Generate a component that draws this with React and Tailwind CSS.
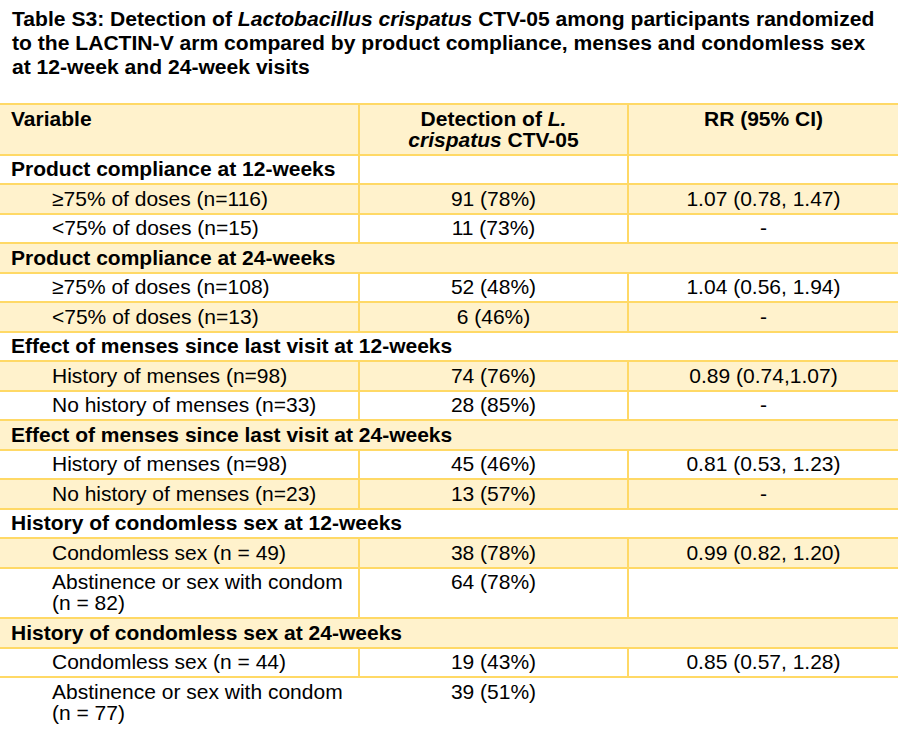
const rows = [
  { type: 'group', label: 'Product compliance at 12-weeks', fill: false, split: true },
  { label: '≥75% of doses (n=116)', det: '91 (78%)', rr: '1.07 (0.78, 1.47)', fill: true },
  { label: '<75% of doses (n=15)', det: '11 (73%)', rr: '-', fill: false },
  { type: 'group', label: 'Product compliance at 24-weeks', fill: true },
  { label: '≥75% of doses (n=108)', det: '52 (48%)', rr: '1.04 (0.56, 1.94)', fill: false },
  { label: '<75% of doses (n=13)', det: '6 (46%)', rr: '-', fill: true },
  { type: 'group', label: 'Effect of menses since last visit at 12-weeks', fill: false },
  { label: 'History of menses (n=98)', det: '74 (76%)', rr: '0.89 (0.74,1.07)', fill: true },
  { label: 'No history of menses (n=33)', det: '28 (85%)', rr: '-', fill: false },
  { type: 'group', label: 'Effect of menses since last visit at 24-weeks', fill: true },
  { label: 'History of menses (n=98)', det: '45 (46%)', rr: '0.81 (0.53, 1.23)', fill: false },
  { label: 'No history of menses (n=23)', det: '13 (57%)', rr: '-', fill: true },
  { type: 'group', label: 'History of condomless sex at 12-weeks', fill: false },
  { label: 'Condomless sex (n = 49)', det: '38 (78%)', rr: '0.99 (0.82, 1.20)', fill: true },
  { label: ['Abstinence or sex with condom', '(n = 82)'], det: '64 (78%)', rr: '', fill: false },
  { type: 'group', label: 'History of condomless sex at 24-weeks', fill: true },
  { label: 'Condomless sex (n = 44)', det: '19 (43%)', rr: '0.85 (0.57, 1.28)', fill: false },
  { label: ['Abstinence or sex with condom', '(n = 77)'], det: '39 (51%)', rr: '', fill: false, last: true },
];

// single-line row: 21 + 6.5 padding + 2 border = 29.5px
const cell = 'pt-[2.5px] pb-[4px] leading-[21px]';

function Label({ label }) {
  if (Array.isArray(label)) {
    return (
      <>
        {label[0]}
        <br />
        {label[1]}
      </>
    );
  }
  return label;
}

function Row({ row }) {
  const bg = row.fill ? 'bg-[#FFF2CC]' : 'bg-white';
  if (row.type === 'group') {
    if (row.split) {
      return (
        <div className={`flex border-b-2 border-[#FFD966] ${bg}`}>
          <div className={`w-[360px] shrink-0 border-r-2 border-[#FFD966] pl-[11px] font-bold ${cell}`}>{row.label}</div>
          <div className={`w-[269px] shrink-0 border-r-2 border-[#FFD966] ${cell}`}></div>
          <div className={`flex-1 ${cell}`}></div>
        </div>
      );
    }
    return (
      <div className={`border-b-2 border-[#FFD966] pl-[11px] font-bold whitespace-nowrap ${bg} ${cell}`}>{row.label}</div>
    );
  }
  const line = row.last ? 'border-transparent' : 'border-[#FFD966]';
  return (
    <div className={`flex ${row.last ? '' : 'border-b-2 border-[#FFD966]'} ${bg}`}>
      <div className={`w-[360px] shrink-0 border-r-2 ${line} pl-[52px] whitespace-nowrap ${cell}`}>
        <Label label={row.label} />
      </div>
      <div className={`w-[269px] shrink-0 border-r-2 ${line} text-center ${cell}`}>{row.det}</div>
      <div className={`flex-1 text-center whitespace-nowrap ${cell}`}>{row.rr}</div>
    </div>
  );
}

export default function App() {
  return (
    <div className="w-[901px] h-[736px] overflow-hidden bg-white text-black font-['Liberation_Sans',Arial,sans-serif] text-[21px]">
      <h1 className="pt-[6.5px] pl-[12px] font-bold text-[21.1px] leading-[24px] whitespace-nowrap">
        Table S3: Detection of <i>Lactobacillus crispatus</i> CTV-05 among participants randomized
        <br />
        to the LACTIN-V arm compared by product compliance, menses and condomless sex
        <br />
        at 12-week and 24-week visits
      </h1>
      <div className="mt-[24.5px] w-[898px] border-t-2 border-[#FFD966]">
        <div className="flex border-b-2 border-[#FFD966] bg-[#FFF2CC] font-bold">
          <div className={`w-[360px] shrink-0 border-r-2 border-[#FFD966] pl-[11px] ${cell}`}>Variable</div>
          <div className={`w-[269px] shrink-0 border-r-2 border-[#FFD966] text-center whitespace-nowrap ${cell}`}>
            Detection of <i>L.</i>
            <br />
            <i>crispatus</i> CTV-05
          </div>
          <div className={`flex-1 text-center ${cell}`}>RR (95% CI)</div>
        </div>
        {rows.map((r, i) => (
          <Row key={i} row={r} />
        ))}
      </div>
    </div>
  );
}
